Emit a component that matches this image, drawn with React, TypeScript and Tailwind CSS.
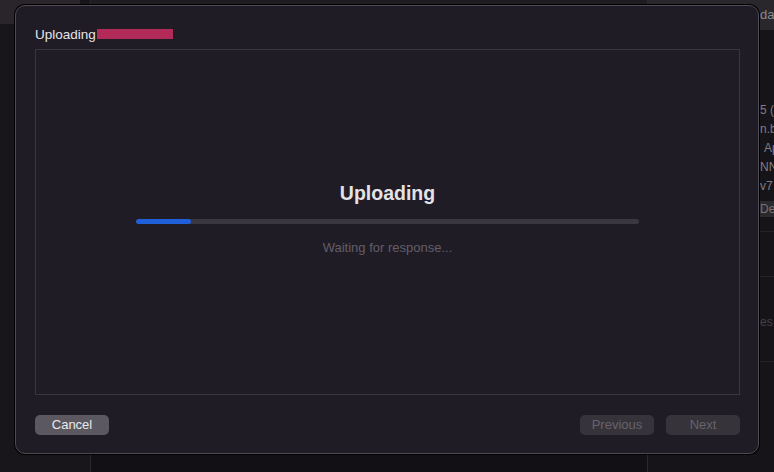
import React from "react";

export default function App() {
  const font = { fontFamily: '"Liberation Sans", Arial, sans-serif' };
  return (
    <div className="relative w-[774px] h-[472px] overflow-hidden bg-[#141216]" style={font}>
      {/* background app panes */}
      <div className="flex h-full w-full">
        <div className="w-[91px] shrink-0 h-full bg-[#18161b] border-r border-[#2a272d] flex flex-col">
          <div className="h-[24px] w-[80px] bg-[#29252b]" />
        </div>
        <div className="w-[557px] shrink-0 h-full bg-[#121014] border-r border-[#2a272d] flex flex-col">
          <div className="h-[5px] bg-[#1e1b21]" />
        </div>
        <div className="flex-1 min-w-0 overflow-hidden h-full bg-[#161418] flex flex-col text-[12px] text-[#807d84]">
          <div className="h-[30px] shrink-0 bg-[#29272b] flex items-center pl-[112px] text-[#8a878d] text-[13px] whitespace-nowrap">date</div>
          <div className="h-[73px] shrink-0" />
          <div className="pl-[112px] flex flex-col gap-[5px] leading-[14px] whitespace-nowrap">
            <span>5 (</span>
            <span>n.b</span>
            <span className="pl-[4px]">Ap</span>
            <span>NN</span>
            <span>v7</span>
          </div>
          <div className="mt-[8px] ml-[110px] h-[16px] shrink-0 bg-[#2a292d] text-[#77747a] pl-[2px] leading-[16px] whitespace-nowrap">De</div>
          <div className="mt-[14px] h-px shrink-0 bg-[#242226]" />
          <div className="mt-[44px] h-px shrink-0 bg-[#242226]" />
          <div className="mt-[36px] pl-[112px] text-[#444146] whitespace-nowrap">es</div>
          <div className="mt-[30px] h-px shrink-0 bg-[#242226]" />
        </div>
      </div>

      {/* dialog */}
      <div className="absolute left-[15px] top-[5px] w-[744px] h-[449px] rounded-[10px] bg-[#201c25] border border-[#4e4b52] shadow-[0_0_0_1px_#000] flex flex-col pl-[19px] pr-[18px]">
        <div className="h-[43px] flex items-end pb-[6px]">
          <span className="relative text-[13.5px] text-[#e6e4e8] leading-[16px]">
            Uploading R
            <span className="absolute left-[62px] top-[2px] w-[76px] h-[10px] bg-[#b22a58]" />
          </span>
        </div>
        <div className="h-[346px] border border-[#3a3640] flex flex-col items-center">
          <div className="mt-[131px] text-[19.5px] font-bold text-[#e4e2e6] leading-[24px]">Uploading</div>
          <div className="mt-[14px] w-[503px] h-[5px] rounded-full bg-[#3a3740] overflow-hidden">
            <div className="h-full w-[55px] rounded-full bg-[#1f5fd9]" />
          </div>
          <div className="mt-[16px] text-[13px] text-[#625e68] leading-[16px]">Waiting for response...</div>
        </div>
        <div className="mt-[20px] flex items-center">
          <button className="w-[74px] h-[20px] rounded-[5px] bg-[#5b585f] text-[13px] text-[#eceaee] leading-[20px]">Cancel</button>
          <div className="flex-1" />
          <button className="w-[74px] h-[20px] rounded-[5px] bg-[#36333b] text-[13px] text-[#66636b] leading-[20px]">Previous</button>
          <button className="ml-[12px] w-[74px] h-[20px] rounded-[5px] bg-[#36333b] text-[13px] text-[#66636b] leading-[20px]">Next</button>
        </div>
      </div>
    </div>
  );
}
